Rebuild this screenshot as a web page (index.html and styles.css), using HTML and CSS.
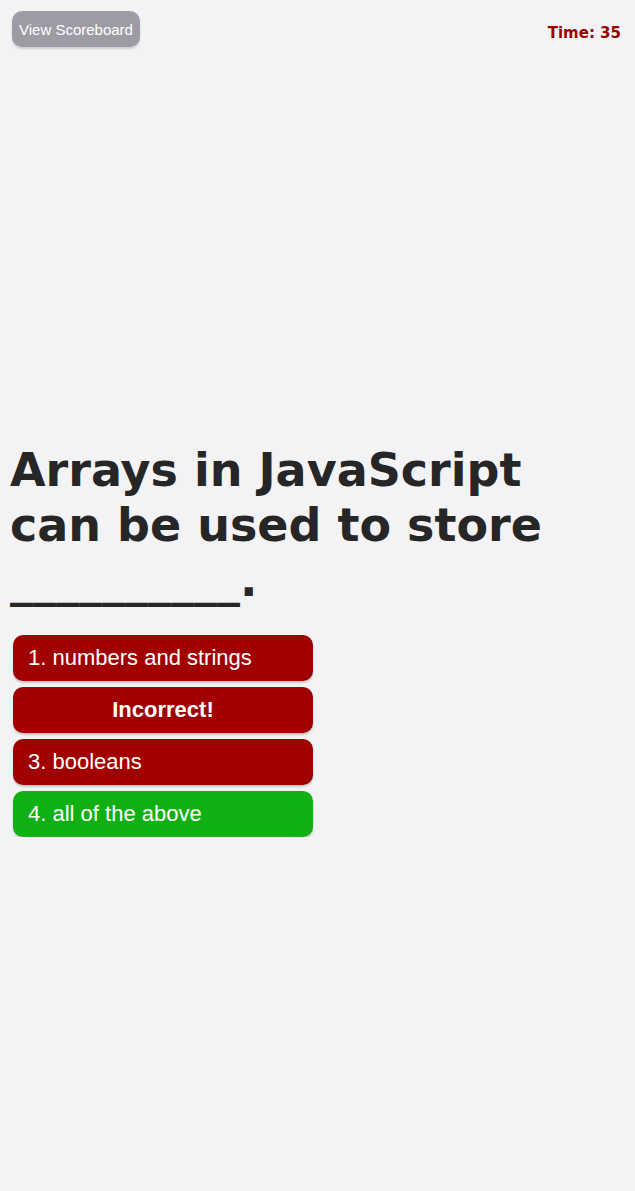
FILE: index.html
```html
<!DOCTYPE html>
<html lang="en">
<head>
  <meta charset="UTF-8" />
  <meta name="viewport" content="width=device-width, initial-scale=1.0" />
  <title>Code Quiz</title>
  <link rel="stylesheet" href="styles.css">
</head>
<body>
  <header class="topbar">
    <button class="score-btn">View Scoreboard</button>
    <div class="timer">Time: 35</div>
  </header>
  <main class="quiz">
    <h1 class="question">Arrays in JavaScript can be used to store __________.</h1>
    <div class="answers">
      <button class="answer wrong">1. numbers and strings</button>
      <button class="answer wrong feedback">Incorrect!</button>
      <button class="answer wrong">3. booleans</button>
      <button class="answer right">4. all of the above</button>
    </div>
  </main>
</body>
</html>
```

FILE: styles.css
```css
* { box-sizing: border-box; }
html, body {
  margin: 0;
  padding: 0;
  background: #f3f3f5;
  min-height: 100%;
}
body {
  font-family: "Liberation Sans", Arial, sans-serif;
  color: #262626;
}
.topbar {
  display: flex;
  justify-content: space-between;
  align-items: flex-start;
  padding: 11px 14px 0 12px;
}
.score-btn {
  font-family: "Liberation Sans", Arial, sans-serif;
  font-size: 15px;
  color: #fff;
  background: #9d9ca4;
  border: none;
  border-radius: 10px;
  height: 36px;
  padding: 0 7px;
  box-shadow: 0 2px 2px rgba(0,0,0,0.15);
}
.timer {
  font-family: "DejaVu Sans", Verdana, sans-serif;
  font-weight: bold;
  font-size: 15px;
  color: #990000;
  padding-top: 13px;
}
.quiz {
  padding: 0 10px;
  margin-top: 396px;
}
.question {
  font-family: "DejaVu Sans", Verdana, sans-serif;
  font-size: 46px;
  font-weight: bold;
  line-height: 55px;
  margin: 0 0 27px;
  max-width: 560px;
  color: #262626;
}
.answers {
  display: flex;
  flex-direction: column;
  gap: 6px;
  padding-left: 3px;
}
.answer {
  width: 300px;
  height: 46px;
  border: none;
  border-radius: 10px;
  color: #fff;
  font-family: "Liberation Sans", Arial, sans-serif;
  font-size: 22px;
  text-align: left;
  padding: 0 15px;
  box-shadow: 0 2px 2px rgba(0,0,0,0.18);
}
.wrong { background: #a10000; }
.right { background: #10b014; }
.feedback {
  text-align: center;
  font-weight: bold;
}
```
